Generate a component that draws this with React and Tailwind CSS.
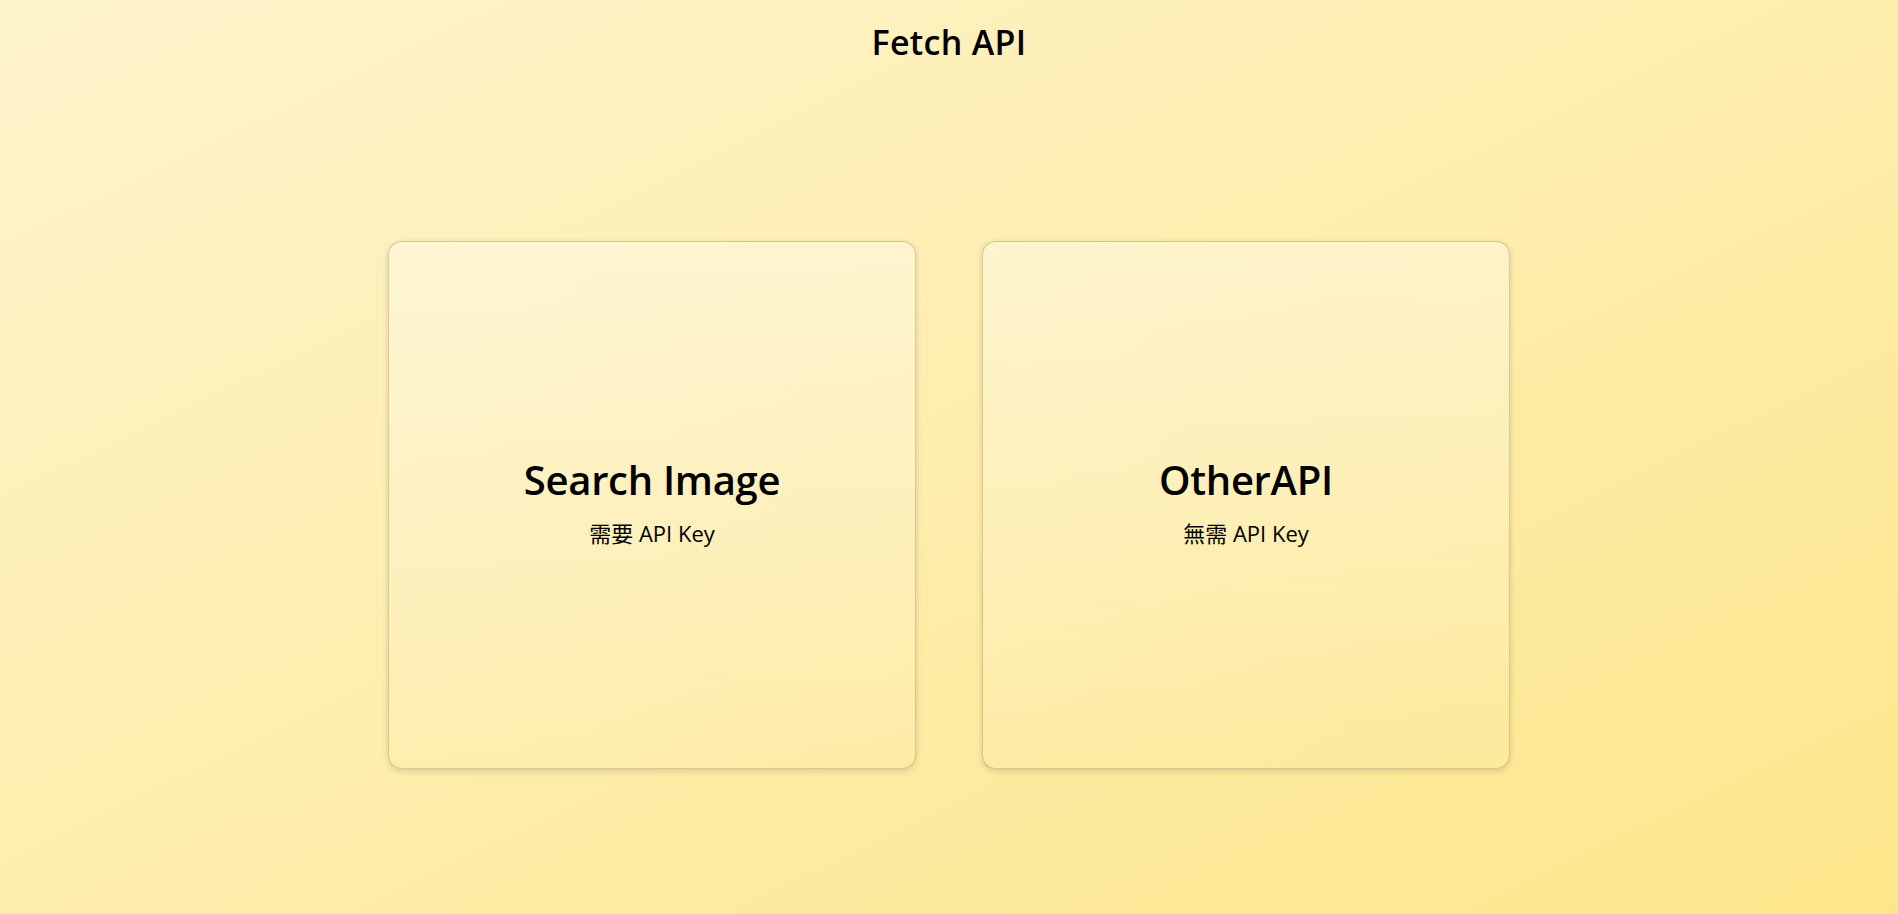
import React from "react";

const font = { fontFamily: '"Open Sans", "Noto Sans CJK TC", sans-serif' };

function Card({ title, sub }) {
  return (
    <div className="flex h-[528px] w-[528px] flex-col items-center justify-center gap-[14px] rounded-[14px] border border-[#8a7a3a]/35 bg-linear-to-b from-white/35 to-white/5 pb-[6px] shadow-[0_2px_6px_rgba(0,0,0,0.15)]">
      <h2 className="text-[40px] leading-[48px] font-semibold tracking-[-0.3px] text-black">{title}</h2>
      <p className="text-[22px] leading-[30px] text-black">{sub}</p>
    </div>
  );
}

export default function App() {
  return (
    <div
      className="flex min-h-screen w-full flex-col items-center bg-linear-to-br from-[#fef4cc] to-[#fde68a]"
      style={font}
    >
      <h1 className="pt-[18px] text-[34px] leading-[48px] font-semibold tracking-[0.3px] text-black">Fetch API</h1>
      <div className="mt-[175px] flex gap-[66px]">
        <Card title="Search Image" sub="需要 API Key" />
        <Card title="OtherAPI" sub="無需 API Key" />
      </div>
    </div>
  );
}
